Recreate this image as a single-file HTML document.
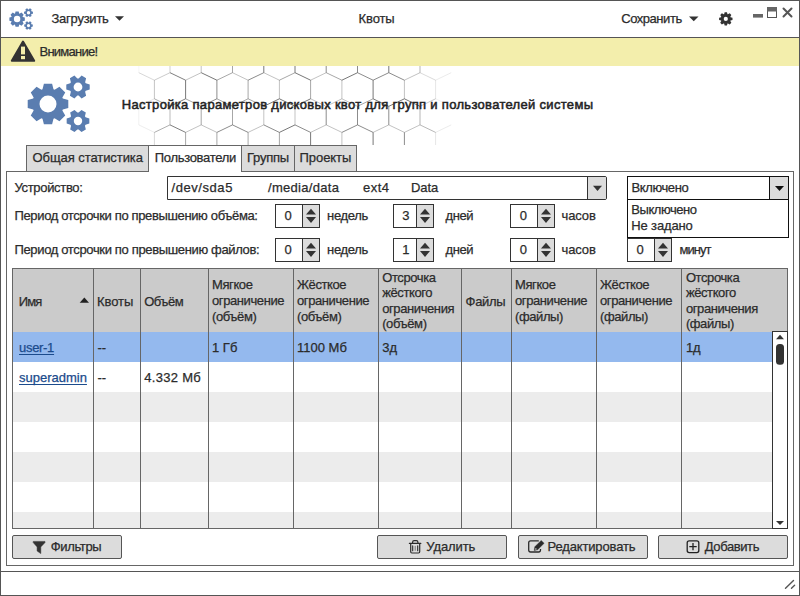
<!DOCTYPE html>
<html><head><meta charset="utf-8"><style>
html,body{margin:0;padding:0;}
body{width:800px;height:596px;overflow:hidden;position:relative;background:#fff;font-family:"Liberation Sans", sans-serif;font-size:13px;color:#2b2b2b;}
.b{position:absolute;}
.t{position:absolute;line-height:15px;white-space:nowrap;-webkit-text-stroke:0.25px currentColor;}
.lk{color:#1b4b8c;text-decoration:underline;text-underline-offset:2px;text-decoration-skip-ink:none;}
</style></head><body>
<div class="b" style="left:0px;top:0px;width:800px;height:596px;border:1px solid #555;box-sizing:border-box;"></div>
<div class="b" style="left:1px;top:37px;width:798px;height:1px;background:#555;"></div>
<div class="b" style="left:1px;top:38px;width:798px;height:28px;background:#f3eeac;"></div>
<svg class="b" style="left:0;top:0" width="800" height="596" viewBox="0 0 800 596"><path d="M22.73,17.01 L24.81,17.54 L24.81,20.66 L22.73,21.19 L22.56,21.60 L23.65,23.45 L21.45,25.65 L19.60,24.56 L19.19,24.73 L18.66,26.81 L15.54,26.81 L15.01,24.73 L14.60,24.56 L12.75,25.65 L10.55,23.45 L11.64,21.60 L11.47,21.19 L9.39,20.66 L9.39,17.54 L11.47,17.01 L11.64,16.60 L10.55,14.75 L12.75,12.55 L14.60,13.64 L15.01,13.47 L15.54,11.39 L18.66,11.39 L19.19,13.47 L19.60,13.64 L21.45,12.55 L23.65,14.75 L22.56,16.60Z M20.33,19.10 A3.23,3.23 0 1 0 13.87,19.10 A3.23,3.23 0 1 0 20.33,19.10ZM31.44,11.21 L32.95,11.65 L32.95,13.63 L31.44,14.07 L31.20,14.47 L31.58,16.00 L29.87,16.99 L28.74,15.90 L28.26,15.90 L27.13,16.99 L25.42,16.00 L25.80,14.47 L25.56,14.07 L24.05,13.63 L24.05,11.65 L25.56,11.21 L25.80,10.81 L25.42,9.28 L27.13,8.29 L28.26,9.38 L28.74,9.38 L29.87,8.29 L31.58,9.28 L31.20,10.81Z M30.17,12.64 A1.6720000000000002,1.6720000000000002 0 1 0 26.83,12.64 A1.6720000000000002,1.6720000000000002 0 1 0 30.17,12.64ZM31.37,24.17 L32.80,24.61 L32.80,26.51 L31.37,26.95 L31.14,27.36 L31.47,28.81 L29.83,29.76 L28.74,28.74 L28.26,28.74 L27.17,29.76 L25.53,28.81 L25.86,27.36 L25.63,26.95 L24.20,26.51 L24.20,24.61 L25.63,24.17 L25.86,23.76 L25.53,22.31 L27.17,21.36 L28.26,22.38 L28.74,22.38 L29.83,21.36 L31.47,22.31 L31.14,23.76Z M30.10,25.56 A1.596,1.596 0 1 0 26.90,25.56 A1.596,1.596 0 1 0 30.10,25.56Z" fill="#5a7db0" fill-rule="evenodd"/><path d="M62.81,98.50 L68.29,99.90 L68.29,108.10 L62.81,109.50 L62.36,110.58 L65.25,115.45 L59.45,121.25 L54.58,118.36 L53.50,118.81 L52.10,124.29 L43.90,124.29 L42.50,118.81 L41.42,118.36 L36.55,121.25 L30.75,115.45 L33.64,110.58 L33.19,109.50 L27.71,108.10 L27.71,99.90 L33.19,98.50 L33.64,97.42 L30.75,92.55 L36.55,86.75 L41.42,89.64 L42.50,89.19 L43.90,83.71 L52.10,83.71 L53.50,89.19 L54.58,89.64 L59.45,86.75 L65.25,92.55 L62.36,97.42Z M56.50,104.00 A8.5,8.5 0 1 0 39.50,104.00 A8.5,8.5 0 1 0 56.50,104.00ZM85.74,83.25 L89.71,84.40 L89.71,89.60 L85.74,90.75 L85.12,91.83 L86.11,95.85 L81.61,98.45 L78.62,95.58 L77.38,95.58 L74.39,98.45 L69.89,95.85 L70.88,91.83 L70.26,90.75 L66.29,89.60 L66.29,84.40 L70.26,83.25 L70.88,82.17 L69.89,78.15 L74.39,75.55 L77.38,78.42 L78.62,78.42 L81.61,75.55 L86.11,78.15 L85.12,82.17Z M82.40,87.00 A4.4,4.4 0 1 0 73.60,87.00 A4.4,4.4 0 1 0 82.40,87.00ZM85.57,117.35 L89.33,118.50 L89.33,123.50 L85.57,124.65 L84.94,125.73 L85.83,129.56 L81.50,132.06 L78.62,129.38 L77.38,129.38 L74.50,132.06 L70.17,129.56 L71.06,125.73 L70.43,124.65 L66.67,123.50 L66.67,118.50 L70.43,117.35 L71.06,116.27 L70.17,112.44 L74.50,109.94 L77.38,112.62 L78.62,112.62 L81.50,109.94 L85.83,112.44 L84.94,116.27Z M82.20,121.00 A4.2,4.2 0 1 0 73.80,121.00 A4.2,4.2 0 1 0 82.20,121.00Z" fill="#5a7db0" fill-rule="evenodd"/><path d="M730.50,17.20 L732.50,17.75 L732.50,20.05 L730.50,20.60 L730.33,21.02 L731.35,22.83 L729.73,24.45 L727.92,23.43 L727.50,23.60 L726.95,25.60 L724.65,25.60 L724.10,23.60 L723.68,23.43 L721.87,24.45 L720.25,22.83 L721.27,21.02 L721.10,20.60 L719.10,20.05 L719.10,17.75 L721.10,17.20 L721.27,16.78 L720.25,14.97 L721.87,13.35 L723.68,14.37 L724.10,14.20 L724.65,12.20 L726.95,12.20 L727.50,14.20 L727.92,14.37 L729.73,13.35 L731.35,14.97 L730.33,16.78Z M727.90,18.90 A2.1,2.1 0 1 0 723.70,18.90 A2.1,2.1 0 1 0 727.90,18.90Z" fill="#333" fill-rule="evenodd"/><path d="M115,16.2 L124,16.2 L119.5,20.8Z" fill="#333"/><path d="M689,16.6 L698.5,16.6 L693.75,21.2Z" fill="#333"/><rect x="753" y="14" width="10" height="3.6" fill="#666"/><rect x="767.5" y="7.5" width="9" height="10" fill="#fff" stroke="#555" stroke-width="1"/><rect x="767" y="7" width="10" height="4.5" fill="#666"/><path d="M783.5,8.5 L791.5,16.5 M791.5,8.5 L783.5,16.5" stroke="#555" stroke-width="2" stroke-linecap="round"/><path d="M23,41.6 L34.2,60.8 L11.8,60.8Z" fill="#333" stroke="#333" stroke-width="2" stroke-linejoin="round"/><rect x="21" y="46.6" width="4" height="7.8" fill="#f3eeac"/><rect x="21" y="56" width="4" height="3.2" fill="#f3eeac"/><path d="M785.5,588.3 L793.5,580.6 M791.5,588.3 L794.6,585.3" stroke="#555" stroke-width="1.4" stroke-linecap="round"/></svg>
<div class="t " style="left:51.5px;top:11.10px;letter-spacing:-0.25px;">Загрузить</div>
<div class="t " style="left:358.5px;top:10.60px;letter-spacing:-0.1px;">Квоты</div>
<div class="t " style="left:621.2px;top:11.00px;letter-spacing:-0.45px;">Сохранить</div>
<div class="t " style="left:39.5px;top:43.60px;letter-spacing:-0.75px;">Внимание!</div>
<svg class="b" style="left:0;top:0" width="800" height="596" viewBox="0 0 800 596"><defs><clipPath id="hc"><rect x="110" y="66" width="360" height="79"/></clipPath></defs><g clip-path="url(#hc)"><path d="M138.8,20.5 L154.4,28.0" stroke="#555" stroke-opacity="0.19" stroke-width="0.8"/><path d="M154.4,28.0 L170.0,20.5" stroke="#555" stroke-opacity="0.39" stroke-width="0.8"/><path d="M170.0,20.5 L185.6,28.0" stroke="#555" stroke-opacity="0.43" stroke-width="0.8"/><path d="M154.4,28.0 L154.4,46.6" stroke="#555" stroke-opacity="0.44" stroke-width="0.8"/><path d="M185.6,28.0 L201.2,20.5" stroke="#555" stroke-opacity="0.85" stroke-width="0.8"/><path d="M201.2,20.5 L216.9,28.0" stroke="#555" stroke-opacity="0.65" stroke-width="0.8"/><path d="M185.6,28.0 L185.6,46.6" stroke="#555" stroke-opacity="0.45" stroke-width="0.8"/><path d="M216.9,28.0 L232.5,20.5" stroke="#555" stroke-opacity="0.45" stroke-width="0.8"/><path d="M232.5,20.5 L248.1,28.0" stroke="#555" stroke-opacity="1.00" stroke-width="0.8"/><path d="M216.9,28.0 L216.9,46.6" stroke="#555" stroke-opacity="1.00" stroke-width="0.8"/><path d="M248.1,28.0 L263.8,20.5" stroke="#555" stroke-opacity="0.65" stroke-width="0.8"/><path d="M263.8,20.5 L279.4,28.0" stroke="#555" stroke-opacity="0.45" stroke-width="0.8"/><path d="M248.1,28.0 L248.1,46.6" stroke="#555" stroke-opacity="0.45" stroke-width="0.8"/><path d="M279.4,28.0 L295.0,20.5" stroke="#555" stroke-opacity="0.45" stroke-width="0.8"/><path d="M295.0,20.5 L310.6,28.0" stroke="#555" stroke-opacity="0.45" stroke-width="0.8"/><path d="M279.4,28.0 L279.4,46.6" stroke="#555" stroke-opacity="0.65" stroke-width="0.8"/><path d="M310.6,28.0 L326.2,20.5" stroke="#555" stroke-opacity="0.65" stroke-width="0.8"/><path d="M326.2,20.5 L341.9,28.0" stroke="#555" stroke-opacity="0.45" stroke-width="0.8"/><path d="M310.6,28.0 L310.6,46.6" stroke="#555" stroke-opacity="1.00" stroke-width="0.8"/><path d="M341.9,28.0 L357.5,20.5" stroke="#555" stroke-opacity="0.85" stroke-width="0.8"/><path d="M357.5,20.5 L373.1,28.0" stroke="#555" stroke-opacity="1.00" stroke-width="0.8"/><path d="M341.9,28.0 L341.9,46.6" stroke="#555" stroke-opacity="0.65" stroke-width="0.8"/><path d="M373.1,28.0 L388.8,20.5" stroke="#555" stroke-opacity="0.65" stroke-width="0.8"/><path d="M388.8,20.5 L404.4,28.0" stroke="#555" stroke-opacity="0.85" stroke-width="0.8"/><path d="M373.1,28.0 L373.1,46.6" stroke="#555" stroke-opacity="1.00" stroke-width="0.8"/><path d="M404.4,28.0 L420.0,20.5" stroke="#555" stroke-opacity="0.45" stroke-width="0.8"/><path d="M420.0,20.5 L435.6,28.0" stroke="#555" stroke-opacity="0.28" stroke-width="0.8"/><path d="M404.4,28.0 L404.4,46.6" stroke="#555" stroke-opacity="1.00" stroke-width="0.8"/><path d="M435.6,28.0 L451.2,20.5" stroke="#555" stroke-opacity="0.19" stroke-width="0.8"/><path d="M435.6,28.0 L435.6,46.6" stroke="#555" stroke-opacity="0.19" stroke-width="0.8"/><path d="M138.8,54.1 L154.4,46.6" stroke="#555" stroke-opacity="0.25" stroke-width="0.8"/><path d="M154.4,46.6 L170.0,54.1" stroke="#555" stroke-opacity="0.27" stroke-width="0.8"/><path d="M138.8,54.1 L138.8,72.7" stroke="#555" stroke-opacity="0.07" stroke-width="0.8"/><path d="M170.0,54.1 L185.6,46.6" stroke="#555" stroke-opacity="0.43" stroke-width="0.8"/><path d="M185.6,46.6 L201.2,54.1" stroke="#555" stroke-opacity="1.00" stroke-width="0.8"/><path d="M170.0,54.1 L170.0,72.7" stroke="#555" stroke-opacity="0.35" stroke-width="0.8"/><path d="M201.2,54.1 L216.9,46.6" stroke="#555" stroke-opacity="0.85" stroke-width="0.8"/><path d="M216.9,46.6 L232.5,54.1" stroke="#555" stroke-opacity="1.00" stroke-width="0.8"/><path d="M201.2,54.1 L201.2,72.7" stroke="#555" stroke-opacity="0.45" stroke-width="0.8"/><path d="M232.5,54.1 L248.1,46.6" stroke="#555" stroke-opacity="0.45" stroke-width="0.8"/><path d="M248.1,46.6 L263.8,54.1" stroke="#555" stroke-opacity="0.45" stroke-width="0.8"/><path d="M232.5,54.1 L232.5,72.7" stroke="#555" stroke-opacity="0.65" stroke-width="0.8"/><path d="M263.8,54.1 L279.4,46.6" stroke="#555" stroke-opacity="0.65" stroke-width="0.8"/><path d="M279.4,46.6 L295.0,54.1" stroke="#555" stroke-opacity="0.45" stroke-width="0.8"/><path d="M263.8,54.1 L263.8,72.7" stroke="#555" stroke-opacity="1.00" stroke-width="0.8"/><path d="M295.0,54.1 L310.6,46.6" stroke="#555" stroke-opacity="1.00" stroke-width="0.8"/><path d="M310.6,46.6 L326.2,54.1" stroke="#555" stroke-opacity="1.00" stroke-width="0.8"/><path d="M295.0,54.1 L295.0,72.7" stroke="#555" stroke-opacity="1.00" stroke-width="0.8"/><path d="M326.2,54.1 L341.9,46.6" stroke="#555" stroke-opacity="0.45" stroke-width="0.8"/><path d="M341.9,46.6 L357.5,54.1" stroke="#555" stroke-opacity="0.65" stroke-width="0.8"/><path d="M326.2,54.1 L326.2,72.7" stroke="#555" stroke-opacity="0.85" stroke-width="0.8"/><path d="M357.5,54.1 L373.1,46.6" stroke="#555" stroke-opacity="0.85" stroke-width="0.8"/><path d="M373.1,46.6 L388.8,54.1" stroke="#555" stroke-opacity="0.45" stroke-width="0.8"/><path d="M357.5,54.1 L357.5,72.7" stroke="#555" stroke-opacity="0.85" stroke-width="0.8"/><path d="M388.8,54.1 L404.4,46.6" stroke="#555" stroke-opacity="0.85" stroke-width="0.8"/><path d="M404.4,46.6 L420.0,54.1" stroke="#555" stroke-opacity="0.45" stroke-width="0.8"/><path d="M388.8,54.1 L388.8,72.7" stroke="#555" stroke-opacity="1.00" stroke-width="0.8"/><path d="M420.0,54.1 L435.6,46.6" stroke="#555" stroke-opacity="0.28" stroke-width="0.8"/><path d="M435.6,46.6 L451.2,54.1" stroke="#555" stroke-opacity="0.15" stroke-width="0.8"/><path d="M420.0,54.1 L420.0,72.7" stroke="#555" stroke-opacity="0.55" stroke-width="0.8"/><path d="M138.8,72.7 L154.4,80.2" stroke="#555" stroke-opacity="0.29" stroke-width="0.8"/><path d="M154.4,80.2 L170.0,72.7" stroke="#555" stroke-opacity="0.39" stroke-width="0.8"/><path d="M170.0,72.7 L185.6,80.2" stroke="#555" stroke-opacity="0.95" stroke-width="0.8"/><path d="M154.4,80.2 L154.4,98.8" stroke="#555" stroke-opacity="0.44" stroke-width="0.8"/><path d="M185.6,80.2 L201.2,72.7" stroke="#555" stroke-opacity="0.45" stroke-width="0.8"/><path d="M201.2,72.7 L216.9,80.2" stroke="#555" stroke-opacity="1.00" stroke-width="0.8"/><path d="M185.6,80.2 L185.6,98.8" stroke="#555" stroke-opacity="1.00" stroke-width="0.8"/><path d="M216.9,80.2 L232.5,72.7" stroke="#555" stroke-opacity="0.65" stroke-width="0.8"/><path d="M232.5,72.7 L248.1,80.2" stroke="#555" stroke-opacity="0.45" stroke-width="0.8"/><path d="M216.9,80.2 L216.9,98.8" stroke="#555" stroke-opacity="0.85" stroke-width="0.8"/><path d="M248.1,80.2 L263.8,72.7" stroke="#555" stroke-opacity="0.85" stroke-width="0.8"/><path d="M263.8,72.7 L279.4,80.2" stroke="#555" stroke-opacity="0.45" stroke-width="0.8"/><path d="M248.1,80.2 L248.1,98.8" stroke="#555" stroke-opacity="0.65" stroke-width="0.8"/><path d="M279.4,80.2 L295.0,72.7" stroke="#555" stroke-opacity="0.65" stroke-width="0.8"/><path d="M295.0,72.7 L310.6,80.2" stroke="#555" stroke-opacity="1.00" stroke-width="0.8"/><path d="M279.4,80.2 L279.4,98.8" stroke="#555" stroke-opacity="0.45" stroke-width="0.8"/><path d="M310.6,80.2 L326.2,72.7" stroke="#555" stroke-opacity="0.45" stroke-width="0.8"/><path d="M326.2,72.7 L341.9,80.2" stroke="#555" stroke-opacity="0.65" stroke-width="0.8"/><path d="M310.6,80.2 L310.6,98.8" stroke="#555" stroke-opacity="0.65" stroke-width="0.8"/><path d="M341.9,80.2 L357.5,72.7" stroke="#555" stroke-opacity="1.00" stroke-width="0.8"/><path d="M357.5,72.7 L373.1,80.2" stroke="#555" stroke-opacity="0.85" stroke-width="0.8"/><path d="M341.9,80.2 L341.9,98.8" stroke="#555" stroke-opacity="0.45" stroke-width="0.8"/><path d="M373.1,80.2 L388.8,72.7" stroke="#555" stroke-opacity="0.85" stroke-width="0.8"/><path d="M388.8,72.7 L404.4,80.2" stroke="#555" stroke-opacity="0.85" stroke-width="0.8"/><path d="M373.1,80.2 L373.1,98.8" stroke="#555" stroke-opacity="1.00" stroke-width="0.8"/><path d="M404.4,80.2 L420.0,72.7" stroke="#555" stroke-opacity="0.45" stroke-width="0.8"/><path d="M420.0,72.7 L435.6,80.2" stroke="#555" stroke-opacity="0.28" stroke-width="0.8"/><path d="M404.4,80.2 L404.4,98.8" stroke="#555" stroke-opacity="0.45" stroke-width="0.8"/><path d="M435.6,80.2 L451.2,72.7" stroke="#555" stroke-opacity="0.15" stroke-width="0.8"/><path d="M435.6,80.2 L435.6,98.8" stroke="#555" stroke-opacity="0.19" stroke-width="0.8"/><path d="M138.8,106.3 L154.4,98.8" stroke="#555" stroke-opacity="0.19" stroke-width="0.8"/><path d="M154.4,98.8 L170.0,106.3" stroke="#555" stroke-opacity="0.60" stroke-width="0.8"/><path d="M138.8,106.3 L138.8,124.9" stroke="#555" stroke-opacity="0.10" stroke-width="0.8"/><path d="M170.0,106.3 L185.6,98.8" stroke="#555" stroke-opacity="0.95" stroke-width="0.8"/><path d="M185.6,98.8 L201.2,106.3" stroke="#555" stroke-opacity="0.65" stroke-width="0.8"/><path d="M170.0,106.3 L170.0,124.9" stroke="#555" stroke-opacity="0.50" stroke-width="0.8"/><path d="M201.2,106.3 L216.9,98.8" stroke="#555" stroke-opacity="0.85" stroke-width="0.8"/><path d="M216.9,98.8 L232.5,106.3" stroke="#555" stroke-opacity="0.65" stroke-width="0.8"/><path d="M201.2,106.3 L201.2,124.9" stroke="#555" stroke-opacity="0.65" stroke-width="0.8"/><path d="M232.5,106.3 L248.1,98.8" stroke="#555" stroke-opacity="0.65" stroke-width="0.8"/><path d="M248.1,98.8 L263.8,106.3" stroke="#555" stroke-opacity="0.65" stroke-width="0.8"/><path d="M232.5,106.3 L232.5,124.9" stroke="#555" stroke-opacity="0.65" stroke-width="0.8"/><path d="M263.8,106.3 L279.4,98.8" stroke="#555" stroke-opacity="1.00" stroke-width="0.8"/><path d="M279.4,98.8 L295.0,106.3" stroke="#555" stroke-opacity="1.00" stroke-width="0.8"/><path d="M263.8,106.3 L263.8,124.9" stroke="#555" stroke-opacity="0.45" stroke-width="0.8"/><path d="M295.0,106.3 L310.6,98.8" stroke="#555" stroke-opacity="1.00" stroke-width="0.8"/><path d="M310.6,98.8 L326.2,106.3" stroke="#555" stroke-opacity="0.45" stroke-width="0.8"/><path d="M295.0,106.3 L295.0,124.9" stroke="#555" stroke-opacity="0.45" stroke-width="0.8"/><path d="M326.2,106.3 L341.9,98.8" stroke="#555" stroke-opacity="0.45" stroke-width="0.8"/><path d="M341.9,98.8 L357.5,106.3" stroke="#555" stroke-opacity="0.45" stroke-width="0.8"/><path d="M326.2,106.3 L326.2,124.9" stroke="#555" stroke-opacity="0.85" stroke-width="0.8"/><path d="M357.5,106.3 L373.1,98.8" stroke="#555" stroke-opacity="0.65" stroke-width="0.8"/><path d="M373.1,98.8 L388.8,106.3" stroke="#555" stroke-opacity="1.00" stroke-width="0.8"/><path d="M357.5,106.3 L357.5,124.9" stroke="#555" stroke-opacity="0.85" stroke-width="0.8"/><path d="M388.8,106.3 L404.4,98.8" stroke="#555" stroke-opacity="1.00" stroke-width="0.8"/><path d="M404.4,98.8 L420.0,106.3" stroke="#555" stroke-opacity="1.00" stroke-width="0.8"/><path d="M388.8,106.3 L388.8,124.9" stroke="#555" stroke-opacity="0.85" stroke-width="0.8"/><path d="M420.0,106.3 L435.6,98.8" stroke="#555" stroke-opacity="0.41" stroke-width="0.8"/><path d="M435.6,98.8 L451.2,106.3" stroke="#555" stroke-opacity="0.10" stroke-width="0.8"/><path d="M420.0,106.3 L420.0,124.9" stroke="#555" stroke-opacity="0.55" stroke-width="0.8"/><path d="M138.8,124.9 L154.4,132.4" stroke="#555" stroke-opacity="0.13" stroke-width="0.8"/><path d="M154.4,132.4 L170.0,124.9" stroke="#555" stroke-opacity="0.60" stroke-width="0.8"/><path d="M170.0,124.9 L185.6,132.4" stroke="#555" stroke-opacity="0.95" stroke-width="0.8"/><path d="M154.4,132.4 L154.4,151.0" stroke="#555" stroke-opacity="0.29" stroke-width="0.8"/><path d="M185.6,132.4 L201.2,124.9" stroke="#555" stroke-opacity="0.45" stroke-width="0.8"/><path d="M201.2,124.9 L216.9,132.4" stroke="#555" stroke-opacity="0.45" stroke-width="0.8"/><path d="M185.6,132.4 L185.6,151.0" stroke="#555" stroke-opacity="0.65" stroke-width="0.8"/><path d="M216.9,132.4 L232.5,124.9" stroke="#555" stroke-opacity="0.85" stroke-width="0.8"/><path d="M232.5,124.9 L248.1,132.4" stroke="#555" stroke-opacity="0.85" stroke-width="0.8"/><path d="M216.9,132.4 L216.9,151.0" stroke="#555" stroke-opacity="0.65" stroke-width="0.8"/><path d="M248.1,132.4 L263.8,124.9" stroke="#555" stroke-opacity="0.45" stroke-width="0.8"/><path d="M263.8,124.9 L279.4,132.4" stroke="#555" stroke-opacity="0.85" stroke-width="0.8"/><path d="M248.1,132.4 L248.1,151.0" stroke="#555" stroke-opacity="0.65" stroke-width="0.8"/><path d="M279.4,132.4 L295.0,124.9" stroke="#555" stroke-opacity="1.00" stroke-width="0.8"/><path d="M295.0,124.9 L310.6,132.4" stroke="#555" stroke-opacity="0.85" stroke-width="0.8"/><path d="M279.4,132.4 L279.4,151.0" stroke="#555" stroke-opacity="0.65" stroke-width="0.8"/><path d="M310.6,132.4 L326.2,124.9" stroke="#555" stroke-opacity="0.45" stroke-width="0.8"/><path d="M326.2,124.9 L341.9,132.4" stroke="#555" stroke-opacity="0.45" stroke-width="0.8"/><path d="M310.6,132.4 L310.6,151.0" stroke="#555" stroke-opacity="1.00" stroke-width="0.8"/><path d="M341.9,132.4 L357.5,124.9" stroke="#555" stroke-opacity="0.85" stroke-width="0.8"/><path d="M357.5,124.9 L373.1,132.4" stroke="#555" stroke-opacity="0.85" stroke-width="0.8"/><path d="M341.9,132.4 L341.9,151.0" stroke="#555" stroke-opacity="0.45" stroke-width="0.8"/><path d="M373.1,132.4 L388.8,124.9" stroke="#555" stroke-opacity="0.45" stroke-width="0.8"/><path d="M388.8,124.9 L404.4,132.4" stroke="#555" stroke-opacity="0.45" stroke-width="0.8"/><path d="M373.1,132.4 L373.1,151.0" stroke="#555" stroke-opacity="1.00" stroke-width="0.8"/><path d="M404.4,132.4 L420.0,124.9" stroke="#555" stroke-opacity="0.45" stroke-width="0.8"/><path d="M420.0,124.9 L435.6,132.4" stroke="#555" stroke-opacity="0.53" stroke-width="0.8"/><path d="M404.4,132.4 L404.4,151.0" stroke="#555" stroke-opacity="0.85" stroke-width="0.8"/><path d="M435.6,132.4 L451.2,124.9" stroke="#555" stroke-opacity="0.15" stroke-width="0.8"/><path d="M435.6,132.4 L435.6,151.0" stroke="#555" stroke-opacity="0.19" stroke-width="0.8"/><path d="M138.8,158.5 L154.4,151.0" stroke="#555" stroke-opacity="0.19" stroke-width="0.8"/><path d="M154.4,151.0 L170.0,158.5" stroke="#555" stroke-opacity="0.51" stroke-width="0.8"/><path d="M138.8,158.5 L138.8,177.1" stroke="#555" stroke-opacity="0.13" stroke-width="0.8"/><path d="M170.0,158.5 L185.6,151.0" stroke="#555" stroke-opacity="0.43" stroke-width="0.8"/><path d="M185.6,151.0 L201.2,158.5" stroke="#555" stroke-opacity="1.00" stroke-width="0.8"/><path d="M170.0,158.5 L170.0,177.1" stroke="#555" stroke-opacity="0.35" stroke-width="0.8"/><path d="M201.2,158.5 L216.9,151.0" stroke="#555" stroke-opacity="1.00" stroke-width="0.8"/><path d="M216.9,151.0 L232.5,158.5" stroke="#555" stroke-opacity="0.45" stroke-width="0.8"/><path d="M201.2,158.5 L201.2,177.1" stroke="#555" stroke-opacity="1.00" stroke-width="0.8"/><path d="M232.5,158.5 L248.1,151.0" stroke="#555" stroke-opacity="0.45" stroke-width="0.8"/><path d="M248.1,151.0 L263.8,158.5" stroke="#555" stroke-opacity="1.00" stroke-width="0.8"/><path d="M232.5,158.5 L232.5,177.1" stroke="#555" stroke-opacity="1.00" stroke-width="0.8"/><path d="M263.8,158.5 L279.4,151.0" stroke="#555" stroke-opacity="0.45" stroke-width="0.8"/><path d="M279.4,151.0 L295.0,158.5" stroke="#555" stroke-opacity="0.45" stroke-width="0.8"/><path d="M263.8,158.5 L263.8,177.1" stroke="#555" stroke-opacity="0.45" stroke-width="0.8"/><path d="M295.0,158.5 L310.6,151.0" stroke="#555" stroke-opacity="0.45" stroke-width="0.8"/><path d="M310.6,151.0 L326.2,158.5" stroke="#555" stroke-opacity="0.45" stroke-width="0.8"/><path d="M295.0,158.5 L295.0,177.1" stroke="#555" stroke-opacity="0.85" stroke-width="0.8"/><path d="M326.2,158.5 L341.9,151.0" stroke="#555" stroke-opacity="1.00" stroke-width="0.8"/><path d="M341.9,151.0 L357.5,158.5" stroke="#555" stroke-opacity="0.85" stroke-width="0.8"/><path d="M326.2,158.5 L326.2,177.1" stroke="#555" stroke-opacity="1.00" stroke-width="0.8"/><path d="M357.5,158.5 L373.1,151.0" stroke="#555" stroke-opacity="1.00" stroke-width="0.8"/><path d="M373.1,151.0 L388.8,158.5" stroke="#555" stroke-opacity="1.00" stroke-width="0.8"/><path d="M357.5,158.5 L357.5,177.1" stroke="#555" stroke-opacity="1.00" stroke-width="0.8"/><path d="M388.8,158.5 L404.4,151.0" stroke="#555" stroke-opacity="0.45" stroke-width="0.8"/><path d="M404.4,151.0 L420.0,158.5" stroke="#555" stroke-opacity="0.45" stroke-width="0.8"/><path d="M388.8,158.5 L388.8,177.1" stroke="#555" stroke-opacity="0.85" stroke-width="0.8"/><path d="M420.0,158.5 L435.6,151.0" stroke="#555" stroke-opacity="0.28" stroke-width="0.8"/><path d="M435.6,151.0 L451.2,158.5" stroke="#555" stroke-opacity="0.23" stroke-width="0.8"/><path d="M420.0,158.5 L420.0,177.1" stroke="#555" stroke-opacity="0.38" stroke-width="0.8"/><path d="M451.2,158.5 L451.2,177.1" stroke="#555" stroke-opacity="0.06" stroke-width="0.8"/></g></svg>
<div class="t " style="left:121.8px;top:96.50px;letter-spacing:0.31px;-webkit-text-stroke:0.5px #222;color:#222;">Настройка параметров дисковых квот для групп и пользователей системы</div>
<div class="b" style="left:6px;top:171px;width:788px;height:395px;border:1px solid #666;box-sizing:border-box;background:#fff;"></div>
<div class="b" style="left:26px;top:145px;width:123px;height:27px;border:1px solid #666;box-sizing:border-box;background:#dcdcdc;"></div>
<div class="b" style="left:241px;top:145px;width:54px;height:27px;border:1px solid #666;box-sizing:border-box;background:#dcdcdc;"></div>
<div class="b" style="left:294px;top:145px;width:63px;height:27px;border:1px solid #666;box-sizing:border-box;background:#dcdcdc;"></div>
<div class="b" style="left:148px;top:145px;width:94px;height:27px;border:1px solid #666;border-bottom:none;box-sizing:border-box;background:#fff;"></div>
<div class="t " style="left:32.5px;top:149.50px;letter-spacing:-0.07px;">Общая статистика</div>
<div class="t " style="left:154.7px;top:149.50px;letter-spacing:-0.3px;">Пользователи</div>
<div class="t " style="left:247px;top:149.50px;letter-spacing:-0.25px;">Группы</div>
<div class="t " style="left:299.6px;top:149.50px;letter-spacing:-0.07px;">Проекты</div>
<div class="b" style="left:1px;top:571px;width:798px;height:1px;background:#555;"></div>
<div class="t " style="left:14.5px;top:180.00px;letter-spacing:-0.33px;">Устройство:</div>
<div class="t " style="left:14.5px;top:208.00px;letter-spacing:-0.36px;">Период отсрочки по превышению объёма:</div>
<div class="t " style="left:14.5px;top:241.80px;letter-spacing:-0.35px;">Период отсрочки по превышению файлов:</div>
<div class="b" style="left:167px;top:176px;width:440px;height:24px;border:1px solid #333;box-sizing:border-box;background:#fff;border-radius:0 2px 2px 0;"></div>
<div class="b" style="left:587px;top:177px;width:19px;height:22px;border-left:1px solid #333;box-sizing:border-box;background:#dcdcdc;border-radius:0 1px 1px 0;"></div>
<div class="t " style="left:171.6px;top:179.60px;letter-spacing:0.55px;">/dev/sda5</div>
<div class="t " style="left:268px;top:179.60px;letter-spacing:0.3px;">/media/data</div>
<div class="t " style="left:363px;top:179.60px;letter-spacing:0.5px;">ext4</div>
<div class="t " style="left:411px;top:179.60px;letter-spacing:-0.1px;">Data</div>
<div class="b" style="left:627px;top:176px;width:162px;height:62px;border:1px solid #111;box-sizing:border-box;background:#fff;"></div>
<div class="b" style="left:627px;top:199px;width:162px;height:1px;background:#111;"></div>
<div class="b" style="left:769px;top:177px;width:19px;height:22px;border-left:1px solid #111;box-sizing:border-box;background:#dcdcdc;"></div>
<div class="t " style="left:631.5px;top:179.70px;letter-spacing:-0.4px;">Включено</div>
<div class="t " style="left:631.3px;top:201.80px;letter-spacing:-0.45px;">Выключено</div>
<div class="t " style="left:631.3px;top:217.50px;letter-spacing:-0.15px;">Не задано</div>
<div class="b" style="left:275px;top:204px;width:45px;height:24px;border:1px solid #333;box-sizing:border-box;background:#fff;"></div>
<div class="b" style="left:302px;top:205px;width:17px;height:22px;border-left:1px solid #333;box-sizing:border-box;background:#dcdcdc;"></div>
<div class="t " style="left:284.6px;top:208.00px;">0</div>
<div class="b" style="left:393px;top:204px;width:41px;height:24px;border:1px solid #333;box-sizing:border-box;background:#fff;"></div>
<div class="b" style="left:416px;top:205px;width:17px;height:22px;border-left:1px solid #333;box-sizing:border-box;background:#dcdcdc;"></div>
<div class="t " style="left:402.2px;top:208.00px;">3</div>
<div class="b" style="left:510px;top:204px;width:45px;height:24px;border:1px solid #333;box-sizing:border-box;background:#fff;"></div>
<div class="b" style="left:537px;top:205px;width:17px;height:22px;border-left:1px solid #333;box-sizing:border-box;background:#dcdcdc;"></div>
<div class="t " style="left:519.8px;top:208.00px;">0</div>
<div class="b" style="left:275px;top:238px;width:45px;height:24px;border:1px solid #333;box-sizing:border-box;background:#fff;"></div>
<div class="b" style="left:302px;top:239px;width:17px;height:22px;border-left:1px solid #333;box-sizing:border-box;background:#dcdcdc;"></div>
<div class="t " style="left:284.6px;top:242.00px;">0</div>
<div class="b" style="left:393px;top:238px;width:41px;height:24px;border:1px solid #333;box-sizing:border-box;background:#fff;"></div>
<div class="b" style="left:416px;top:239px;width:17px;height:22px;border-left:1px solid #333;box-sizing:border-box;background:#dcdcdc;"></div>
<div class="t " style="left:402.2px;top:242.00px;">1</div>
<div class="b" style="left:510px;top:238px;width:45px;height:24px;border:1px solid #333;box-sizing:border-box;background:#fff;"></div>
<div class="b" style="left:537px;top:239px;width:17px;height:22px;border-left:1px solid #333;box-sizing:border-box;background:#dcdcdc;"></div>
<div class="t " style="left:519.8px;top:242.00px;">0</div>
<div class="b" style="left:627px;top:238px;width:45px;height:24px;border:1px solid #333;box-sizing:border-box;background:#fff;"></div>
<div class="b" style="left:654px;top:239px;width:17px;height:22px;border-left:1px solid #333;box-sizing:border-box;background:#dcdcdc;"></div>
<div class="t " style="left:636.5px;top:242.00px;">0</div>
<div class="t " style="left:327px;top:208.00px;letter-spacing:-0.3px;">недель</div>
<div class="t " style="left:445.4px;top:208.00px;letter-spacing:-0.35px;">дней</div>
<div class="t " style="left:561.5px;top:208.00px;letter-spacing:-0.1px;">часов</div>
<div class="t " style="left:327px;top:241.80px;letter-spacing:-0.3px;">недель</div>
<div class="t " style="left:445.4px;top:241.80px;letter-spacing:-0.35px;">дней</div>
<div class="t " style="left:561.5px;top:241.80px;letter-spacing:-0.1px;">часов</div>
<div class="t " style="left:679.5px;top:241.80px;letter-spacing:-1.0px;">минут</div>
<div class="b" style="left:12px;top:268px;width:776px;height:261px;border:1px solid #666;box-sizing:border-box;background:#fff;"></div>
<div class="b" style="left:13px;top:269px;width:774px;height:63px;background:#cbcbcb;"></div>
<div class="b" style="left:13px;top:332px;width:759px;height:30px;background:#94b9ee;"></div>
<div class="b" style="left:13px;top:392px;width:759px;height:30px;background:#ececec;"></div>
<div class="b" style="left:13px;top:452px;width:759px;height:30px;background:#ececec;"></div>
<div class="b" style="left:13px;top:512px;width:759px;height:16px;background:#ececec;"></div>
<div class="b" style="left:93px;top:269px;width:1px;height:259px;background:#666;"></div>
<div class="b" style="left:140px;top:269px;width:1px;height:259px;background:#666;"></div>
<div class="b" style="left:208px;top:269px;width:1px;height:259px;background:#666;"></div>
<div class="b" style="left:293px;top:269px;width:1px;height:259px;background:#666;"></div>
<div class="b" style="left:378px;top:269px;width:1px;height:259px;background:#666;"></div>
<div class="b" style="left:461px;top:269px;width:1px;height:259px;background:#666;"></div>
<div class="b" style="left:511px;top:269px;width:1px;height:259px;background:#666;"></div>
<div class="b" style="left:596px;top:269px;width:1px;height:259px;background:#666;"></div>
<div class="b" style="left:681px;top:269px;width:1px;height:259px;background:#666;"></div>
<div class="b" style="left:772px;top:331px;width:16px;height:198px;border:1px solid #333;box-sizing:border-box;background:#fff;"></div>
<div class="t " style="left:18.75px;top:294.00px;letter-spacing:-0.9px;">Имя</div>
<div class="t " style="left:97.1px;top:294.00px;letter-spacing:-0.1px;">Квоты</div>
<div class="t " style="left:144.2px;top:294.00px;letter-spacing:-0.5px;">Объём</div>
<div class="t " style="left:465.6px;top:294.00px;letter-spacing:-0.3px;">Файлы</div>
<div class="t " style="left:212px;top:277.30px;letter-spacing:-0.4px;">Мягкое</div>
<div class="t " style="left:212px;top:292.95px;letter-spacing:-0.4px;">ограничение</div>
<div class="t " style="left:212px;top:308.60px;letter-spacing:-0.4px;">(объём)</div>
<div class="t " style="left:297px;top:277.30px;letter-spacing:-0.4px;">Жёсткое</div>
<div class="t " style="left:297px;top:292.95px;letter-spacing:-0.4px;">ограничение</div>
<div class="t " style="left:297px;top:308.60px;letter-spacing:-0.4px;">(объём)</div>
<div class="t " style="left:382.2px;top:269.50px;letter-spacing:-0.4px;">Отсрочка</div>
<div class="t " style="left:382.2px;top:285.15px;letter-spacing:-0.4px;">жёсткого</div>
<div class="t " style="left:382.2px;top:300.80px;letter-spacing:-0.4px;">ограничения</div>
<div class="t " style="left:382.2px;top:316.45px;letter-spacing:-0.4px;">(объём)</div>
<div class="t " style="left:515px;top:277.30px;letter-spacing:-0.4px;">Мягкое</div>
<div class="t " style="left:515px;top:292.95px;letter-spacing:-0.4px;">ограничение</div>
<div class="t " style="left:515px;top:308.60px;letter-spacing:-0.4px;">(файлы)</div>
<div class="t " style="left:600px;top:277.30px;letter-spacing:-0.4px;">Жёсткое</div>
<div class="t " style="left:600px;top:292.95px;letter-spacing:-0.4px;">ограничение</div>
<div class="t " style="left:600px;top:308.60px;letter-spacing:-0.4px;">(файлы)</div>
<div class="t " style="left:685.9px;top:269.50px;letter-spacing:-0.4px;">Отсрочка</div>
<div class="t " style="left:685.9px;top:285.15px;letter-spacing:-0.4px;">жёсткого</div>
<div class="t " style="left:685.9px;top:300.80px;letter-spacing:-0.4px;">ограничения</div>
<div class="t " style="left:685.9px;top:316.45px;letter-spacing:-0.4px;">(файлы)</div>
<div class="t lk" style="left:19px;top:339.70px;letter-spacing:-0.3px;">user-1</div>
<div class="t " style="left:97.4px;top:339.70px;">--</div>
<div class="t " style="left:212px;top:339.70px;">1 Гб</div>
<div class="t " style="left:297px;top:339.70px;">1100 Мб</div>
<div class="t " style="left:382.2px;top:339.70px;">3д</div>
<div class="t " style="left:685.9px;top:339.70px;">1д</div>
<div class="t lk" style="left:19px;top:369.60px;letter-spacing:0px;">superadmin</div>
<div class="t " style="left:97.4px;top:369.60px;">--</div>
<div class="t " style="left:144.2px;top:369.60px;letter-spacing:0.3px;">4.332 Мб</div>
<div class="b" style="left:12px;top:535px;width:110px;height:24px;border:1px solid #555;box-sizing:border-box;background:#dcdcdc;border-radius:2px;"></div>
<div class="t " style="left:50.75px;top:538.80px;letter-spacing:-0.35px;">Фильтры</div>
<div class="b" style="left:377px;top:535px;width:130px;height:24px;border:1px solid #555;box-sizing:border-box;background:#dcdcdc;border-radius:2px;"></div>
<div class="t " style="left:426.25px;top:538.80px;letter-spacing:-0.1px;">Удалить</div>
<div class="b" style="left:518px;top:535px;width:130px;height:24px;border:1px solid #555;box-sizing:border-box;background:#dcdcdc;border-radius:2px;"></div>
<div class="t " style="left:547.5px;top:538.80px;letter-spacing:-0.15px;">Редактировать</div>
<div class="b" style="left:658px;top:535px;width:130px;height:24px;border:1px solid #555;box-sizing:border-box;background:#dcdcdc;border-radius:2px;"></div>
<div class="t " style="left:704.75px;top:538.80px;letter-spacing:-0.4px;">Добавить</div>
<svg class="b" style="left:0;top:0" width="800" height="596" viewBox="0 0 800 596"><path d="M306.0,214.6 L316.0,214.6 L311.0,208.8Z M306.0,217.1 L316.0,217.1 L311.0,222.9Z" fill="#333"/><path d="M420.0,214.6 L430.0,214.6 L425.0,208.8Z M420.0,217.1 L430.0,217.1 L425.0,222.9Z" fill="#333"/><path d="M541.0,214.6 L551.0,214.6 L546.0,208.8Z M541.0,217.1 L551.0,217.1 L546.0,222.9Z" fill="#333"/><path d="M306.0,248.6 L316.0,248.6 L311.0,242.8Z M306.0,251.1 L316.0,251.1 L311.0,256.9Z" fill="#333"/><path d="M420.0,248.6 L430.0,248.6 L425.0,242.8Z M420.0,251.1 L430.0,251.1 L425.0,256.9Z" fill="#333"/><path d="M541.0,248.6 L551.0,248.6 L546.0,242.8Z M541.0,251.1 L551.0,251.1 L546.0,256.9Z" fill="#333"/><path d="M658.0,248.6 L668.0,248.6 L663.0,242.8Z M658.0,251.1 L668.0,251.1 L663.0,256.9Z" fill="#333"/><path d="M593,185.8 L602,185.8 L597.5,191Z" fill="#333"/><path d="M775,185.9 L784,185.9 L779.5,191.1Z" fill="#111"/><path d="M776,339.2 L784,339.2 L780.0,334.8Z" fill="#333"/><path d="M776,521.1 L784,521.1 L780.0,525.1Z" fill="#333"/><rect x="776" y="344.1" width="8" height="20.7" rx="3.5" fill="#333"/><path d="M79.7,302.8 L89,302.8 L84.35,297.5Z" fill="#222"/><path d="M33.2,541.4 L45,541.4 L45,542.6 L40.8,546.9 L40.8,553.6 L37.1,551 L37.1,546.9 L33.2,542.6Z" fill="#333" stroke="#333" stroke-width="0.5" stroke-linejoin="round"/><path d="M409.4,543.4 L420.8,543.4 M412.6,543.2 L412.6,542.2 Q412.6,540.7 414.1,540.7 L416.4,540.7 Q417.9,540.7 417.9,542.2 L417.9,543.2 M410.7,543.8 L410.7,551.8 Q410.7,553 411.9,553 L418.5,553 Q419.7,553 419.7,551.8 L419.7,543.8" fill="none" stroke="#2a2a2a" stroke-width="1.2" stroke-linecap="round"/><path d="M412.7,545.9 L412.7,550.7 M417.7,545.9 L417.7,550.7" stroke="#2a2a2a" stroke-width="1.1" stroke-linecap="round"/><path d="M415.2,545.9 L415.2,550.7" stroke="#777" stroke-width="1"/><path d="M538.8,540.9 L530.6,540.9 Q528.7,540.9 528.7,542.8 L528.7,550.1 Q528.7,552 530.6,552 L538.6,552 Q540.5,552 540.5,550.1 L540.5,548.9" fill="none" stroke="#2a2a2a" stroke-width="1.3"/><path d="M534.2,550.6 L534.8,546.8 L541.2,540.4 L544.1,543.3 L537.7,549.7 Z" fill="#2a2a2a" stroke="#2a2a2a" stroke-width="0.4" stroke-linejoin="round"/><circle cx="535.9" cy="548.9" r="0.75" fill="#ddd"/><rect x="687.2" y="540.8" width="11.6" height="11.8" rx="2" fill="none" stroke="#222" stroke-width="1.3"/><path d="M693,543 L693,550.3 M689.3,546.7 L696.7,546.7" stroke="#222" stroke-width="1.3"/></svg>
</body></html>
